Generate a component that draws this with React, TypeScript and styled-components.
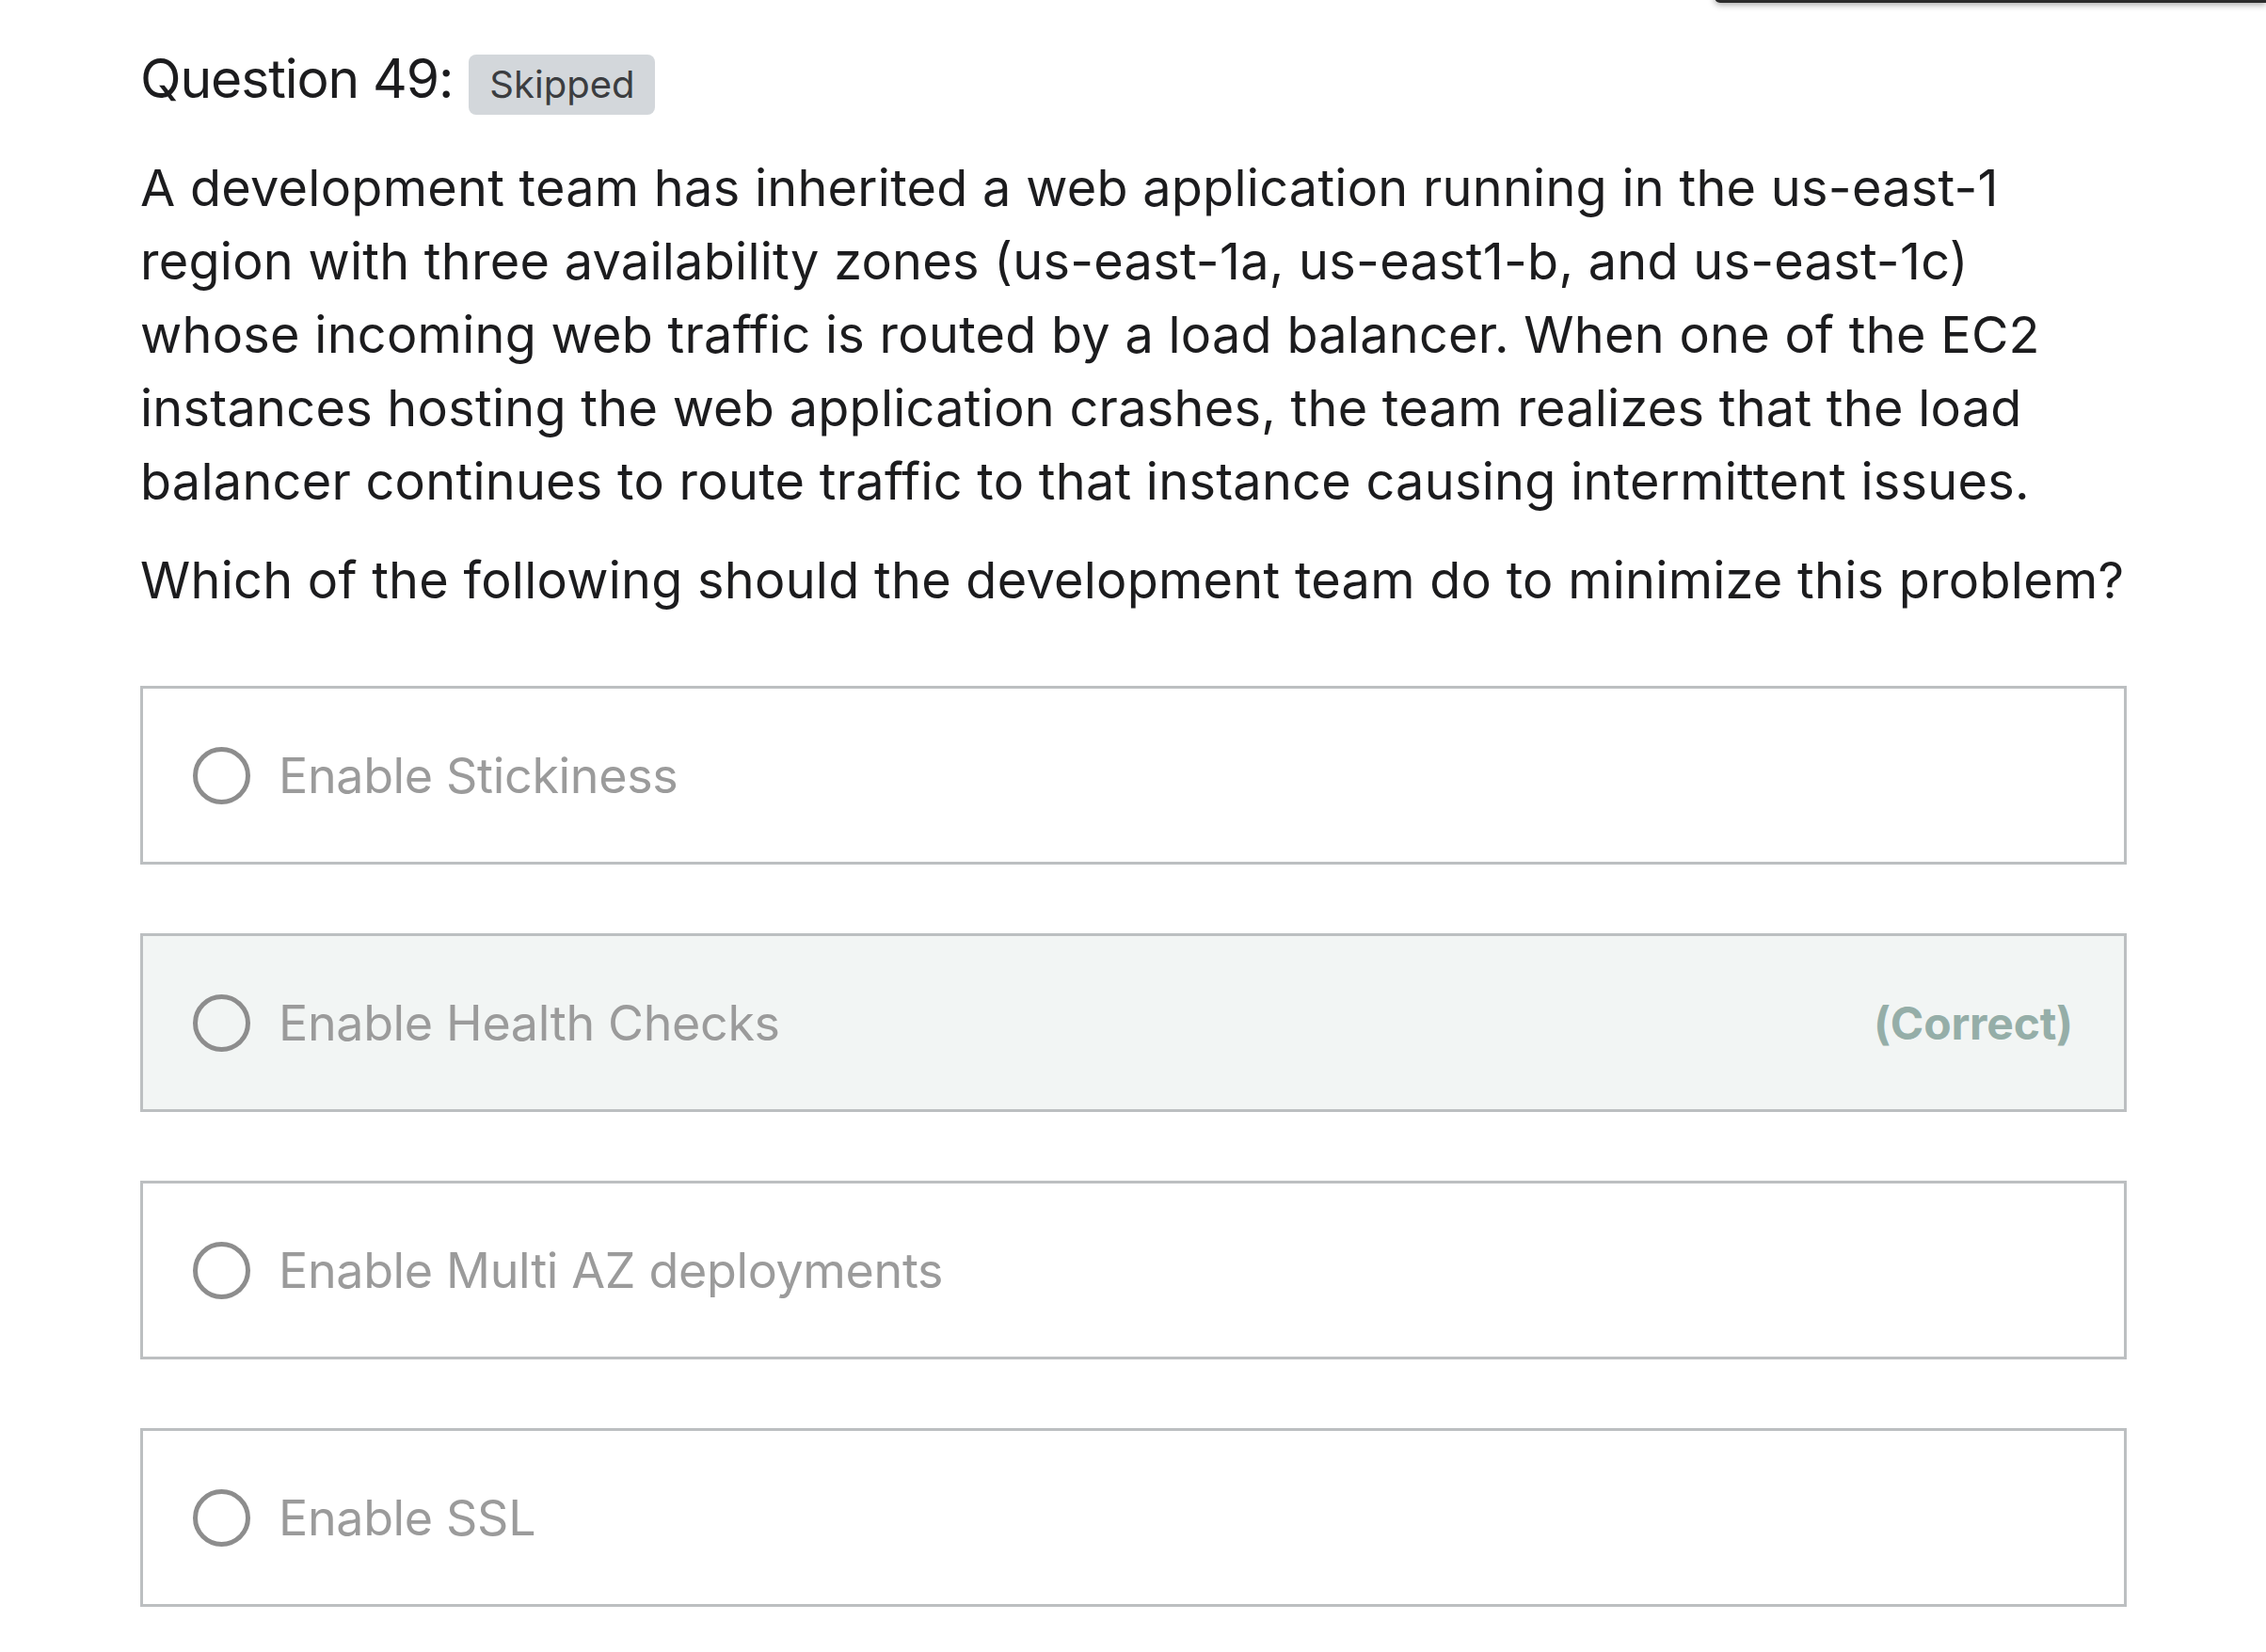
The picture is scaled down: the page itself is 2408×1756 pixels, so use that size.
import React from "react";
import styled, { createGlobalStyle } from "styled-components";

const GlobalStyle = createGlobalStyle`
  html, body {
    margin: 0;
    padding: 0;
    background: #ffffff;
  }
  body {
    font-family: Inter, "Noto Sans", "Liberation Sans", sans-serif;
    -webkit-font-smoothing: antialiased;
  }
`;

const Page = styled.div`
  position: relative;
  width: 2408px;
  min-height: 1756px;
  background: #ffffff;
  overflow: hidden;
`;

const TopOverlay = styled.div`
  position: absolute;
  top: -37px;
  left: 1822px;
  right: 0;
  height: 40px;
  background: #2b2b2b;
  border-bottom-left-radius: 6px;
  box-shadow: 0 2px 7px rgba(0, 0, 0, 0.35);
`;

const Content = styled.main`
  width: 2111px;
  margin-left: 149px;
  padding-top: 49px;
`;

const Header = styled.div`
  display: flex;
  align-items: baseline;
  gap: 17px;
`;

const Title = styled.h2`
  margin: 0;
  font-size: 57px;
  font-weight: 400;
  line-height: 69px;
  color: #1c1c1e;
  letter-spacing: -1.1px;
`;

const Badge = styled.span`
  display: inline-block;
  height: 64px;
  line-height: 64px;
  padding: 0 22px;
  border-radius: 8px;
  background: #d3d7db;
  color: #3b3d40;
  font-size: 40px;
  font-weight: 400;
`;

const Paragraph = styled.p<{ $gap?: number }>`
  margin: ${(p) => p.$gap ?? 0}px 0 0;
  font-size: 54px;
  line-height: 78px;
  color: #1c1c1e;
  font-weight: 400;
  letter-spacing: 0.27px;
`;

const Options = styled.div`
  display: flex;
  flex-direction: column;
  gap: 73px;
  margin-top: 73px;
`;

const Option = styled.label<{ $highlight?: boolean }>`
  display: flex;
  align-items: center;
  box-sizing: border-box;
  height: 190px;
  padding: 0 54px 0 53px;
  border: 3px solid #bcbfc1;
  background: ${(p) => (p.$highlight ? "#f2f5f4" : "#ffffff")};
`;

const Radio = styled.span`
  flex: none;
  box-sizing: border-box;
  width: 61px;
  height: 61px;
  border-radius: 50%;
  border: 5px solid #8d8d8d;
`;

const OptionText = styled.span`
  flex: 1;
  margin-left: 30px;
  font-size: 52px;
  color: #9b9b9b;
  letter-spacing: -0.35px;
`;

const CorrectTag = styled.span`
  font-size: 48px;
  font-weight: 700;
  color: #95aea8;
  letter-spacing: -0.2px;
`;

const options = [
  { text: "Enable Stickiness", correct: false },
  { text: "Enable Health Checks", correct: true },
  { text: "Enable Multi AZ deployments", correct: false },
  { text: "Enable SSL", correct: false },
];

export default function App() {
  return (
    <Page>
      <GlobalStyle />
      <TopOverlay />
      <Content>
        <Header>
          <Title>Question 49:</Title>
          <Badge>Skipped</Badge>
        </Header>
        <Paragraph $gap={39}>
          A development team has inherited a web application running in the
          us-east-1 region with three availability zones (us-east-1a,
          us-east1-b, and us-east-1c) whose incoming web traffic is routed by a
          load balancer. When one of the EC2 instances hosting the web
          application crashes, the team realizes that the load balancer
          continues to route traffic to that instance causing intermittent
          issues.
        </Paragraph>
        <Paragraph $gap={27}>
          Which of the following should the development team do to minimize
          this problem?
        </Paragraph>
        <Options>
          {options.map((o) => (
            <Option key={o.text} $highlight={o.correct}>
              <Radio />
              <OptionText>{o.text}</OptionText>
              {o.correct && <CorrectTag>(Correct)</CorrectTag>}
            </Option>
          ))}
        </Options>
      </Content>
    </Page>
  );
}
